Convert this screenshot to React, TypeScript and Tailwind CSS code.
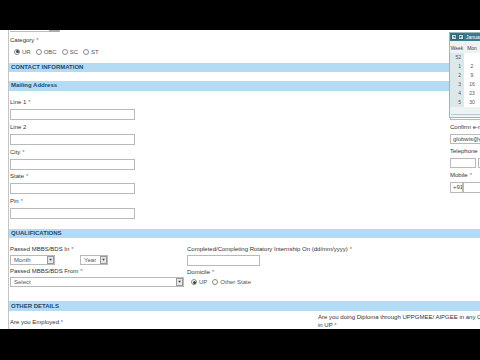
import React from "react";

const Label = ({ children, h = "h-[14px]", req = false }: { children: React.ReactNode; h?: string; req?: boolean }) => (
  <div className={`${h} flex items-center text-[6px] leading-[8px] text-[#333] whitespace-nowrap`}>
    {children}
    {req && <span className="ml-[2px] text-[#777]">*</span>}
  </div>
);

const Input = ({ w = "w-[125px]", h = "h-[11px]", value }: { w?: string; h?: string; value?: string }) => (
  <div className={`${w} ${h} border border-[#b9b9b9] bg-white text-[6px] leading-[9px] text-[#444] pl-[2px] overflow-hidden whitespace-nowrap shrink-0`}>
    {value}
  </div>
);

const Band = ({ children, mt }: { children: React.ReactNode; mt: string }) => (
  <div className={`${mt} h-[10px] -ml-[1px] pl-[2px] bg-[#b3dcf4] flex items-center text-[6px] font-bold text-[#20486e] whitespace-nowrap`}>
    {children}
  </div>
);

const Radio = ({ on, label }: { on?: boolean; label: string }) => (
  <div className="flex items-center gap-[2px]">
    <span className="w-[6px] h-[6px] rounded-full border border-[#8a8a8a] bg-white flex items-center justify-center">
      {on && <span className="w-[3px] h-[3px] rounded-full bg-[#444]" />}
    </span>
    <span className="text-[6px] leading-[8px] text-[#555]">{label}</span>
  </div>
);

const Select = ({ w, text }: { w: string; text: string }) => (
  <div className={`${w} h-[10px] border border-[#b9b9b9] bg-white flex items-center shrink-0`}>
    <span className="flex-1 text-[6px] leading-[8px] text-[#555] pl-[3px] whitespace-nowrap overflow-hidden">{text}</span>
    <span className="w-[7px] h-[8px] border border-[#999] bg-[#e8e8e8] flex items-center justify-center text-[4px] text-[#333] leading-none">
      ▼
    </span>
  </div>
);

export default function App() {
  const rows: [string, string][] = [
    ["52", ""],
    ["1", "2"],
    ["2", "9"],
    ["3", "16"],
    ["4", "23"],
    ["5", "30"],
  ];
  return (
    <div
      className="w-[480px] h-[360px] bg-black overflow-hidden flex flex-col"
      style={{ fontFamily: '"Liberation Sans", Arial, sans-serif' }}
    >
      <div className="h-[30px] shrink-0 bg-black" />
      <div className="h-[299px] shrink-0 bg-white relative overflow-hidden">
        <div className="ml-[8px] h-full border-l border-[#c4c4c4] pl-[1px] flex flex-col">
          <div className="w-[50px] h-[2px] border-b border-r border-[#bdbdbd] flex justify-end">
            <span className="w-[10px] h-[2px] bg-[#aaa]" />
          </div>
          <div className="mt-[1px]">
            <Label req>Category</Label>
          </div>
          <div className="h-[10px] flex items-center gap-[5px] pl-[4px]">
            <Radio on label="UR" />
            <Radio label="OBC" />
            <Radio label="SC" />
            <Radio label="ST" />
          </div>
          <Band mt="mt-[6px]">CONTACT INFORMATION</Band>
          <Band mt="mt-[9px]">Mailing Address</Band>
          <div className="mt-[4px] flex">
            <div className="w-[440px] shrink-0 flex flex-col">
              <Label req>Line 1</Label>
              <Input />
              <Label>Line 2</Label>
              <Input />
              <Label req>City</Label>
              <Input />
              <Label req h="h-[13px]">State</Label>
              <Input />
              <Label req>Pin</Label>
              <Input />
            </div>
            <div className="flex-1 flex flex-col overflow-hidden">
              <Label req>E-mail</Label>
              <Input w="w-[60px]" value="globwis@gmail.com" />
              <Label req>Confirm e-mail</Label>
              <Input w="w-[60px]" h="h-[10px]" value="globwis@gmail.com" />
              <Label>Telephone</Label>
              <div className="flex gap-[2px]">
                <Input w="w-[26px]" h="h-[10px]" />
                <Input w="w-[40px]" h="h-[10px]" />
              </div>
              <Label req h="h-[14px]">Mobile</Label>
              <div className="flex">
                <Input w="w-[13px]" value="+91" />
                <Input w="w-[40px]" />
              </div>
            </div>
          </div>
          <Band mt="mt-[10px]">QUALIFICATIONS</Band>
          <div className="mt-[5px] flex">
            <div className="w-[177px] shrink-0 flex flex-col">
              <Label req h="h-[12px]">Passed MBBS/BDS In</Label>
              <div className="flex gap-[25px]">
                <Select w="w-[45px]" text="Month" />
                <Select w="w-[28px]" text="Year" />
              </div>
              <Label req h="h-[12px]">Passed MBBS/BDS From</Label>
              <Select w="w-[174px]" text="Select" />
            </div>
            <div className="flex-1 flex flex-col">
              <Label req h="h-[12px]">Completed/Completing Rotatory Internship On (dd/mm/yyyy)</Label>
              <Input w="w-[73px]" />
              <Label req h="h-[11px]">Domicile</Label>
              <div className="h-[10px] flex items-center gap-[5px] pl-[4px]">
                <Radio on label="UP" />
                <Radio label="Other State" />
              </div>
            </div>
          </div>
          <Band mt="mt-[14px]">OTHER DETAILS</Band>
          <div className="flex">
            <div className="w-[308px] shrink-0 mt-[7px] text-[6px] leading-[8px] text-[#333]">
              Are you Employed <span className="text-[#777]">*</span>
            </div>
            <div className="flex-1 mt-[2px] text-[6px] leading-[8px] text-[#333] whitespace-nowrap">
              <div>Are you doing Diploma through UPPGMEE/ AIPGEE in any College</div>
              <div>
                in UP <span className="text-[#777]">*</span>
              </div>
            </div>
          </div>
        </div>

        {/* Calendar popup */}
        <div className="absolute left-[449px] top-[2px] w-[40px] h-[86px] border border-[#9cb8be] bg-[#edf2f3] flex flex-col">
          <div className="h-[8px] shrink-0 bg-[#3c7b8b] flex items-center gap-[1px] px-[1px]">
            <span className="w-[6px] h-[6px] bg-[#cfe4ec] border border-[#2d6573] flex items-center justify-center text-[4px] leading-none text-[#24505c]">◄</span>
            <span className="w-[6px] h-[6px] bg-[#cfe4ec] border border-[#2d6573] flex items-center justify-center text-[4px] leading-none text-[#24505c]">►</span>
            <span className="ml-[1px] text-[5px] leading-none text-white whitespace-nowrap">January</span>
          </div>
          <div className="mt-[3px] h-[9px] shrink-0 flex items-center text-[5px] leading-none text-[#444]">
            <span className="w-[14px] text-center">Week</span>
            <span className="w-[16px] text-center">Mon</span>
          </div>
          <div className="flex shrink-0">
            <div className="w-[14px] bg-[#dde8eb] flex flex-col">
              {rows.map(([w], i) => (
                <div key={i} className="h-[9px] flex items-center justify-end pr-[3px] text-[5px] leading-none text-[#555]">
                  {w}
                </div>
              ))}
            </div>
            <div className="w-[16px] bg-white flex flex-col">
              {rows.map(([, d], i) => (
                <div key={i} className="h-[9px] flex items-center justify-center text-[5px] leading-none text-[#555]">
                  {d}
                </div>
              ))}
            </div>
          </div>
          <div className="mt-auto mb-[2px] mx-[1px] h-[1px] shrink-0 bg-[#b8cacd]" />
        </div>
      </div>
      <div className="flex-1 bg-black" />
    </div>
  );
}
